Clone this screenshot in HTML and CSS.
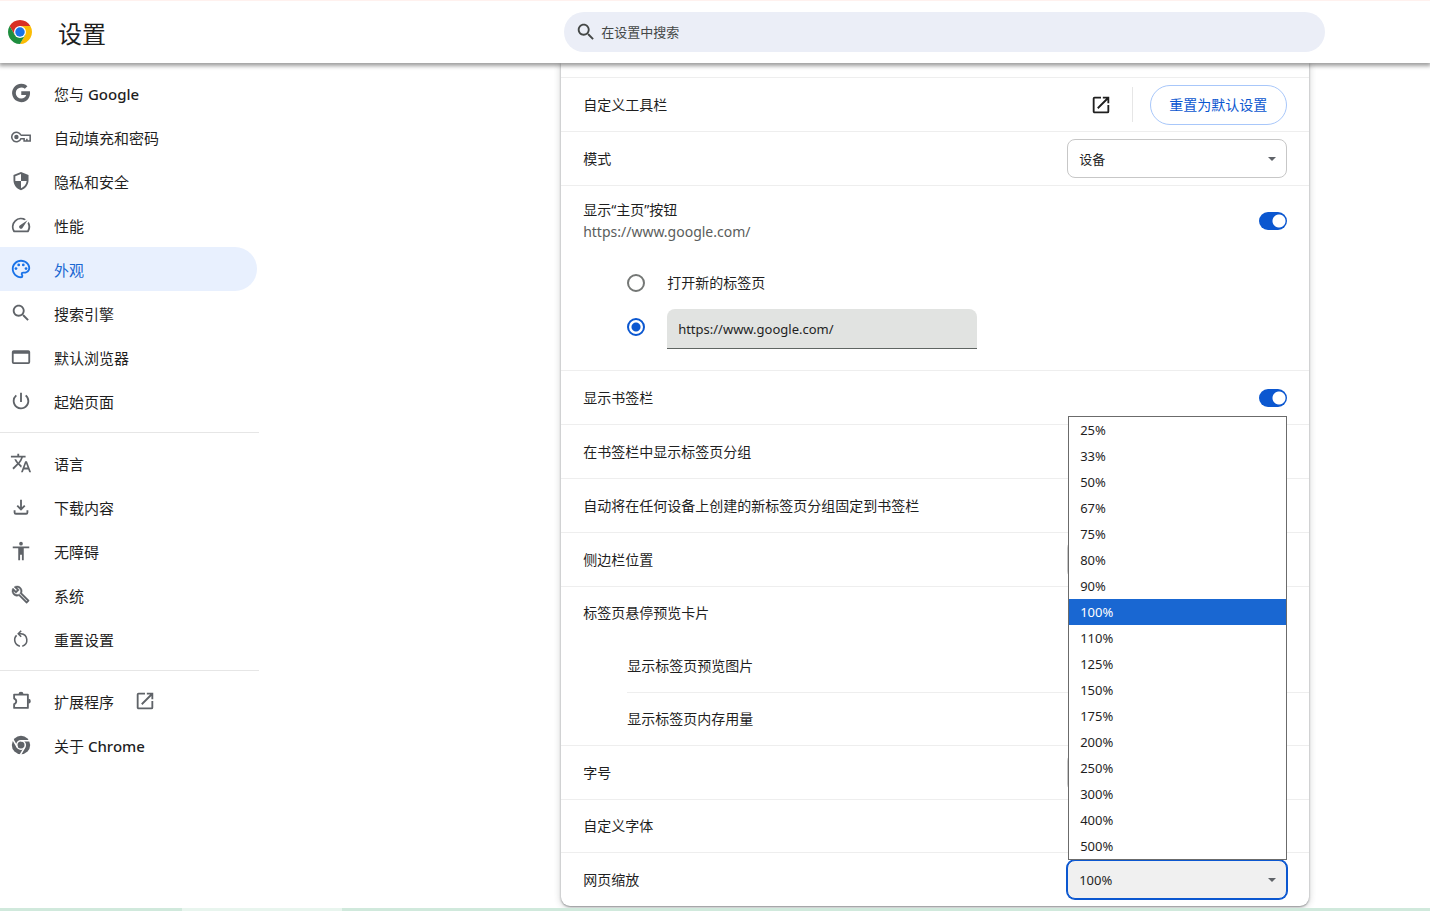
FILE: index.html
```html
<!DOCTYPE html>
<html lang="zh-CN">
<head>
<meta charset="utf-8">
<title>设置</title>
<link rel="stylesheet" href="styles.css">
</head>
<body>
<header class="toolbar">
  <div class="brand">
    <svg class="logo" viewBox="0 0 48 48" aria-hidden="true">
      <path fill="#fbbc04" d="M24 12h20.78A24 24 0 0 1 24 48l10.4-18z"/>
      <path fill="#d93025" d="M24 12h20.78A24 24 0 0 0 3.22 12L13.6 30z"/>
      <path fill="#1e8e3e" d="M34.4 30 24 48A24 24 0 0 1 3.22 12L13.6 30z"/>
      <circle cx="24" cy="24" r="12" fill="#fff"/>
      <circle cx="24" cy="24" r="9.5" fill="#1a73e8"/>
    </svg>
    <h1 class="title">设置</h1>
  </div>
  <label class="search">
    <svg class="icon" viewBox="0 0 24 24" aria-hidden="true"><path d="M15.5 14h-.79l-.28-.27C15.41 12.59 16 11.11 16 9.5 16 5.91 13.09 3 9.5 3S3 5.91 3 9.5 5.91 16 9.5 16c1.61 0 3.09-.59 4.23-1.57l.27.28v.79l5 4.99L20.49 19l-4.99-5zm-6 0C7.01 14 5 11.99 5 9.5S7.01 5 9.5 5 14 7.01 14 9.5 11.99 14 9.5 14z"/></svg>
    <input class="search-input" type="text" placeholder="在设置中搜索">
  </label>
</header>

<div class="page">
  <nav class="menu">
    <a class="item" href="#people">
      <svg class="icon" viewBox="0 0 24 24"><path d="M12.3 10.2v3.9h5.4c-.7 2.3-2.6 3.9-5.4 3.9a6 6 0 1 1 0-12c1.5 0 2.8.5 3.9 1.4l2.8-2.8A10 10 0 1 0 12.3 22c8.4 0 10.2-7.9 9.4-11.8z"/></svg>
      <span class="text">您与 <span class="latin">Google</span></span></a>
    <a class="item" href="#autofill">
      <svg class="icon line thin" viewBox="0 0 24 24"><path d="M11.9 10.1A5.2 5.2 0 1 0 11.9 13.9H15.4V16.4H18.4V13.9M18.4 16.4H22V10.1H11.9"/><circle class="solid" cx="7" cy="12" r="2.4"/></svg>
      <span class="text">自动填充和密码</span></a>
    <a class="item" href="#privacy">
      <svg class="icon" viewBox="0 0 24 24"><path fill-rule="evenodd" d="M12 2.2 3.8 5.4v5.8c0 5 3.4 9.4 8.2 10.8 4.8-1.4 8.2-5.8 8.2-10.8V5.4zM5.8 6.8 12 4.3V12H5.8zM12 12h6.2c-.5 3.7-2.9 6.7-6.2 7.9z"/></svg>
      <span class="text">隐私和安全</span></a>
    <a class="item" href="#performance">
      <svg class="icon" viewBox="0 0 24 24"><path d="m20.38 8.57-1.23 1.85a8 8 0 0 1-.22 7.58H5.07A8 8 0 0 1 15.58 6.85l1.85-1.23A10 10 0 0 0 3.35 19a2 2 0 0 0 1.72 1h13.85a2 2 0 0 0 1.74-1 10 10 0 0 0-.27-10.44zm-9.79 6.84a2 2 0 0 0 2.83 0l5.66-8.49-8.49 5.66a2 2 0 0 0 0 2.83z"/></svg>
      <span class="text">性能</span></a>
    <a class="item active" href="#appearance" aria-current="page">
      <svg class="icon" viewBox="0 0 24 24"><path d="M12 22C6.49 22 2 17.51 2 12S6.49 2 12 2s10 4.04 10 9c0 3.31-2.69 6-6 6h-1.77c-.28 0-.5.22-.5.5 0 .12.05.23.13.33.41.47.64 1.06.64 1.67A2.5 2.5 0 0 1 12 22zm0-18c-4.41 0-8 3.59-8 8s3.59 8 8 8c.28 0 .5-.22.5-.5a.54.54 0 0 0-.14-.35c-.41-.46-.63-1.05-.63-1.65a2.5 2.5 0 0 1 2.5-2.5H16c2.21 0 4-1.79 4-4 0-3.86-3.59-7-8-7z"/><circle cx="6.5" cy="11.5" r="1.5"/><circle cx="9.5" cy="7.5" r="1.5"/><circle cx="14.5" cy="7.5" r="1.5"/><circle cx="17.5" cy="11.5" r="1.5"/></svg>
      <span class="text">外观</span></a>
    <a class="item" href="#search">
      <svg class="icon" viewBox="0 0 24 24"><path d="M15.5 14h-.79l-.28-.27C15.41 12.59 16 11.11 16 9.5 16 5.91 13.09 3 9.5 3S3 5.91 3 9.5 5.91 16 9.5 16c1.61 0 3.09-.59 4.23-1.57l.27.28v.79l5 4.99L20.49 19l-4.99-5zm-6 0C7.01 14 5 11.99 5 9.5S7.01 5 9.5 5 14 7.01 14 9.5 11.99 14 9.5 14z"/></svg>
      <span class="text">搜索引擎</span></a>
    <a class="item" href="#default-browser">
      <svg class="icon" viewBox="0 0 24 24"><path fill-rule="evenodd" d="M4 4.5h16a2 2 0 0 1 2 2v11a2 2 0 0 1-2 2H4a2 2 0 0 1-2-2v-11a2 2 0 0 1 2-2zM4 8.4v9.2h16V8.4z"/></svg>
      <span class="text">默认浏览器</span></a>
    <a class="item" href="#on-startup">
      <svg class="icon" viewBox="0 0 24 24"><path d="M13 3h-2v10h2V3zm4.83 2.17-1.42 1.42A6.92 6.92 0 0 1 19 12a7 7 0 1 1-11.42-5.42L6.17 5.17A8.93 8.93 0 0 0 3 12a9 9 0 1 0 14.83-6.83z"/></svg>
      <span class="text">起始页面</span></a>
    <hr class="rule">
    <a class="item" href="#languages">
      <svg class="icon" viewBox="0 0 24 24"><path d="m12.87 15.07-2.54-2.51.03-.03A17.5 17.5 0 0 0 14.07 6H17V4h-7V2H8v2H1v1.99h11.17C11.5 7.92 10.44 9.75 9 11.35 8.07 10.32 7.3 9.19 6.69 8h-2c.73 1.63 1.73 3.17 2.98 4.56l-5.09 5.02L4 19l5-5 3.11 3.11.76-2.04zM18.5 10h-2L12 22h2l1.12-3h4.75L21 22h2l-4.5-12zm-2.62 7 1.62-4.33L19.12 17h-3.24z"/></svg>
      <span class="text">语言</span></a>
    <a class="item" href="#downloads">
      <svg class="icon line" viewBox="0 0 24 24"><path d="M12 4v10.6M7.9 10.6l4.1 4.1 4.1-4.1M5 15.6V18a1.4 1.4 0 0 0 1.4 1.4h11.2A1.4 1.4 0 0 0 19 18v-2.4"/></svg>
      <span class="text">下载内容</span></a>
    <a class="item" href="#accessibility">
      <svg class="icon" viewBox="0 0 24 24"><circle cx="12" cy="4" r="2"/><path d="M21 9h-6v13h-2v-6h-2v6H9V9H3V7h18v2z"/></svg>
      <span class="text">无障碍</span></a>
    <a class="item" href="#system">
      <svg class="icon" viewBox="-1.5 -1.5 28 28"><path stroke="currentColor" stroke-width=".5" d="m22.61 18.99-9.08-9.08c.93-2.34.45-5.1-1.44-7C9.79.61 6.21.4 3.66 2.26L7.5 6.11 6.08 7.52 2.25 3.69C.39 6.23.6 9.82 2.9 12.11c1.86 1.86 4.57 2.35 6.89 1.48l9.11 9.11c.39.39 1.02.39 1.41 0l2.3-2.3c.4-.38.4-1.01 0-1.41zm-3 1.6-9.46-9.46c-.61.45-1.29.72-2 .82-1.36.2-2.79-.21-3.83-1.25C3.37 9.76 2.93 8.5 3 7.26l3.09 3.09 4.24-4.24-3.09-3.09c1.24-.07 2.49.37 3.44 1.31 1.08 1.08 1.49 2.57 1.24 3.96-.12.71-.42 1.37-.88 1.96l9.45 9.45-.88.89z"/></svg>
      <span class="text">系统</span></a>
    <a class="item" href="#reset">
      <svg class="icon line thin" viewBox="0 0 24 24"><path d="M10.8 19.8A6.9 6.9 0 0 1 7.2 8.1M9.4 6.3H12a6.9 6.9 0 0 1 1.4 13.5M12.2 3 9 6.3l3.2 3.3"/></svg>
      <span class="text">重置设置</span></a>
    <hr class="rule">
    <a class="item" href="#extensions">
      <svg class="icon line" viewBox="0 0 24 24"><path stroke-linejoin="round" d="M4.5 5h15v14.5h-15v-4.2a3.1 3.1 0 0 0 0-6z"/><path class="solid" d="M9.3 4.5a2.7 2.7 0 0 1 5.4 0zM20 9.5a2.7 2.7 0 0 1 0 5.4z"/></svg>
      <span class="text">扩展程序</span>
      <svg class="icon external" viewBox="0 0 24 24"><path d="M19 19H5V5h7V3H5a2 2 0 0 0-2 2v14c0 1.1.89 2 2 2h14a2 2 0 0 0 2-2v-7h-2v7zM14 3v2h3.59l-9.83 9.83 1.41 1.41L19 6.41V10h2V3h-7z"/></svg></a>
    <a class="item" href="#help">
      <svg class="icon" viewBox="0 0 24 24"><circle cx="12" cy="12" r="10"/><g fill="none" stroke="#fff" stroke-width="1.7"><circle cx="12" cy="12" r="4.7"/><path d="M12 7.3h10M7.9 14.3 2.9 5.7M16.1 14.3l-5 8.7"/></g></svg>
      <span class="text">关于 <span class="latin">Chrome</span></span></a>
  </nav>

  <main class="card">
    <section class="row">
      <span class="label">自定义工具栏</span>
      <button class="icon-button" type="button" aria-label="自定义工具栏"><svg class="icon" viewBox="0 0 24 24"><path d="M19 19H5V5h7V3H5a2 2 0 0 0-2 2v14c0 1.1.89 2 2 2h14a2 2 0 0 0 2-2v-7h-2v7zM14 3v2h3.59l-9.83 9.83 1.41 1.41L19 6.41V10h2V3h-7z"/></svg></button>
      <span class="divider"></span>
      <button class="pill" type="button">重置为默认设置</button>
    </section>
    <section class="row">
      <label class="label" for="mode">模式</label>
      <span class="picker"><select class="select" id="mode"><option>设备</option></select></span>
    </section>
    <section class="group">
      <div class="row two-line">
        <label class="label" for="home">显示“主页”按钮<span class="sub">https://www.google.com/</span></label>
        <input class="toggle" type="checkbox" id="home" checked>
      </div>
      <div class="choices">
        <label class="choice"><input class="radio" type="radio" name="home-page"><span>打开新的标签页</span></label>
        <div class="choice custom">
          <input class="radio" type="radio" name="home-page" aria-label="https://www.google.com/" checked>
          <input class="url" type="text" value="https://www.google.com/" aria-label="https://www.google.com/">
        </div>
      </div>
    </section>
    <section class="row">
      <label class="label" for="bookmarks">显示书签栏</label>
      <input class="toggle" type="checkbox" id="bookmarks" checked>
    </section>
    <section class="row"><span class="label">在书签栏中显示标签页分组</span></section>
    <section class="row"><span class="label">自动将在任何设备上创建的新标签页分组固定到书签栏</span></section>
    <section class="row">
      <label class="label" for="side">侧边栏位置</label>
      <span class="picker"><select class="select" id="side"></select></span>
    </section>
    <section class="group">
      <div class="row short"><span class="label">标签页悬停预览卡片</span></div>
      <div class="nested">
        <div class="row"><span class="label">显示标签页预览图片</span></div>
        <div class="row short"><span class="label">显示标签页内存用量</span></div>
      </div>
    </section>
    <section class="row">
      <label class="label" for="size">字号</label>
      <span class="picker"><select class="select" id="size"></select></span>
    </section>
    <section class="row short"><span class="label">自定义字体</span></section>
    <section class="row">
      <label class="label" for="zoom">网页缩放</label>
      <span class="picker open">
        <select class="select" id="zoom"><option>100%</option></select>
        <ul class="options" role="listbox">
          <li>25%</li><li>33%</li><li>50%</li><li>67%</li><li>75%</li><li>80%</li><li>90%</li>
          <li class="selected">100%</li>
          <li>110%</li><li>125%</li><li>150%</li><li>175%</li><li>200%</li><li>250%</li><li>300%</li><li>400%</li><li>500%</li>
        </ul>
      </span>
    </section>
  </main>
</div>
<footer class="strip"></footer>
</body>
</html>
```

FILE: styles.css
```css
* { box-sizing: border-box; }

body {
  margin: 0;
  min-height: 100vh;
  display: flex;
  flex-direction: column;
  background: #fff;
  color: #1f1f1f;
  font: 14px/20px "Noto Sans", "Noto Sans CJK SC", sans-serif;
}

input, select, button { font: inherit; color: inherit; }

.icon {
  flex: none;
  display: block;
  width: 22px;
  height: 22px;
  fill: currentColor;
}
.line { fill: none; stroke: currentColor; stroke-width: 2; }
.thin { stroke-width: 1.7; }
.solid { fill: currentColor; stroke: none; }

/* Top bar */
.toolbar {
  position: relative;
  z-index: 2;
  display: grid;
  grid-template-columns: 259px 35fr minmax(0, 761px) 12fr;
  align-items: center;
  height: 63px;
  border-top: 1px solid #fff1ee;
  background: #fff;
  box-shadow: 0 2px 4px 1px rgba(0, 0, 0, .38);
}
.brand { display: flex; align-items: center; gap: 26px; padding-left: 8px; }
.logo { width: 24px; height: 24px; }
.title { margin: 0; font-size: 24px; line-height: 32px; font-weight: 400; padding-top: 4px; }
.search {
  grid-column: 3;
  display: flex;
  align-items: center;
  gap: 4px;
  height: 40px;
  padding: 0 11px;
  border-radius: 20px;
  background: #ebeef7;
  color: #444746;
}
.search-input {
  flex: 1;
  min-width: 0;
  padding: 0;
  border: 0;
  outline: 0;
  background: none;
  font-size: 13px;
}
.search-input::placeholder { color: #444746; opacity: 1; }

.page {
  flex: 1;
  display: grid;
  grid-template-columns: 259px 5fr minmax(0, 748px) 2fr;
  align-items: start;
}

/* Side menu */
.menu { padding-top: 8px; }
.item {
  display: flex;
  align-items: center;
  gap: 22px;
  height: 44px;
  margin-right: 2px;
  padding-left: 10px;
  border-radius: 0 22px 22px 0;
  color: #1f1f1f;
  font-size: 15px;
  text-decoration: none;
}
.item .icon { color: #5f6368; }
.item.active { background: #e8f0fe; color: #1967d2; }
.item.active .icon { color: #1a73e8; }
.item .external { margin-left: -2px; }
.text { padding-top: 2px; }
.latin { font-weight: 500; }
.rule { margin: 9px 0 8px; border: 0; border-top: 1px solid #e6e6e6; }

/* Settings card */
.card {
  grid-column: 3;
  padding-top: 14px;
  border-radius: 0 0 9px 9px;
  background: #fff;
  box-shadow: 0 1px 2px rgba(60, 64, 67, .5), 0 1px 6px 1px rgba(60, 64, 67, .2);
}
.row {
  display: flex;
  align-items: center;
  height: 54px;
  padding: 0 22px;
  border-top: 1px solid #eee;
}
.row.short { height: 53px; }
.row.two-line { height: 71px; }
.two-line .label { padding-top: 2px; }
.label { flex: 1; }
.sub { display: block; color: #5a5d5c; line-height: 24px; }
.nested { padding-left: 66px; }
.nested .row { padding-left: 0; }
.nested .row:first-child { height: 53px; border-top: 0; }

.icon-button {
  padding: 0;
  border: 0;
  background: none;
}
.divider { width: 1px; height: 35px; margin: 0 17px 0 20px; background: #e6e6e6; }
.pill {
  height: 40px;
  padding: 0 19px 0 18px;
  border: 1px solid #a8c7fa;
  border-radius: 20px;
  background: #fff;
  color: #0b57d0;
}

.toggle {
  appearance: none;
  width: 28px;
  height: 18px;
  margin: 0;
  border-radius: 9px;
  background: radial-gradient(circle at 20px 9px, #fff 6px, #0b57d0 7px);
}

.choices { display: grid; gap: 4px; padding: 6px 22px 20px 66px; }
.choice { display: flex; align-items: center; gap: 22px; height: 42px; }
.custom { align-items: flex-start; padding-top: 1px; }
.custom .radio { margin-top: 9px; }
.radio {
  appearance: none;
  width: 18px;
  height: 18px;
  margin: 0;
  border: 2px solid #747775;
  border-radius: 50%;
}
.radio:checked {
  border-color: #0b57d0;
  background: radial-gradient(circle, #0b57d0 4px, #fff 5px);
}
.url {
  width: 310px;
  height: 40px;
  padding: 0 11px;
  border: 0;
  border-bottom: 1px solid #5f6562;
  border-radius: 8px 8px 0 0;
  background: #e1e3e1;
  font-size: 13px;
}

.picker { position: relative; width: 220px; }
.select {
  appearance: none;
  display: block;
  width: 100%;
  height: 39px;
  padding: 0 11px;
  border: 1px solid #c7c7c7;
  border-radius: 8px;
  background: #fff;
  font-size: 13px;
}
.picker::after {
  content: "";
  position: absolute;
  right: 11px;
  top: 18px;
  border: 4px solid transparent;
  border-top-color: #5f6368;
  border-bottom: 0;
}
.open .select {
  border-color: #0b57d0;
  background: #f0f0f0;
  box-shadow: 0 0 0 1px #0b57d0;
}
.options {
  position: absolute;
  z-index: 1;
  left: 1px;
  right: 0;
  bottom: 100%;
  margin: 0;
  padding: 0;
  border: 1px solid #6b6b6b;
  background: #fff;
  list-style: none;
  font-size: 13px;
  line-height: 26px;
}
.options li { padding: 0 11px; height: 26px; }
.options .selected { background: #1967d2; color: #fff; }

.strip {
  height: 3px;
  background: linear-gradient(90deg, #d0e9dc 182px, #e8f5ee 182px 342px, #d0e9dc 342px);
}
```
